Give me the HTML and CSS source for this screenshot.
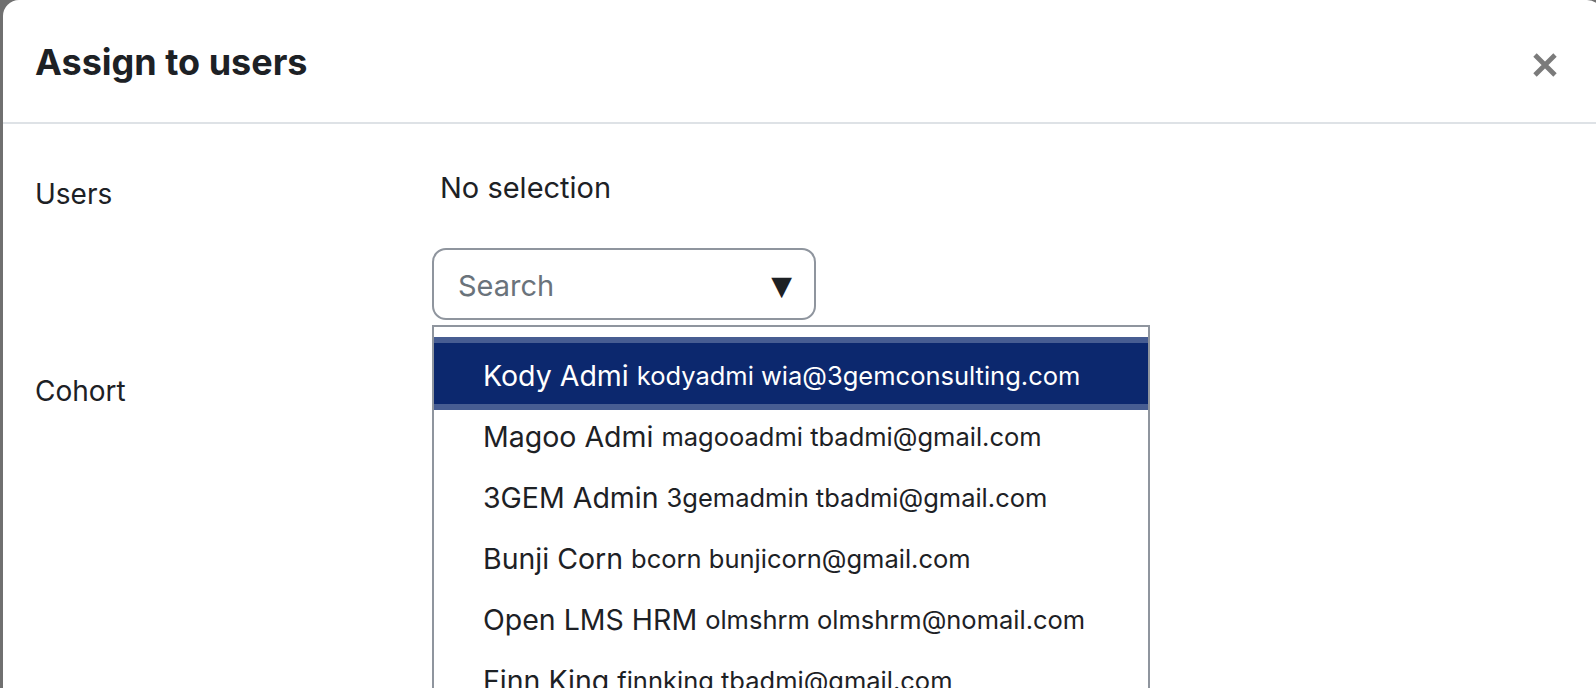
FILE: index.html
```html
<!DOCTYPE html>
<html lang="en">
<head>
<meta charset="utf-8">
<title>Assign to users</title>
<link rel="stylesheet" href="styles.css">
</head>
<body>
<div class="modal">
  <div class="modal-header">
    <h1 class="modal-title">Assign to users</h1>
    <button class="close" aria-label="Close">
      <svg width="26" height="26" viewBox="0 0 26 26"><path d="M3 3 L23 23 M23 3 L3 23" stroke="#7b7b7b" stroke-width="4.8" stroke-linecap="butt"/></svg>
    </button>
  </div>
  <div class="modal-body">
    <div class="form-row">
      <label class="form-label">Users</label>
      <div class="form-control-col">
        <div class="selection">No selection</div>
        <div class="autocomplete">
          <div class="search-box">
            <span class="placeholder">Search</span>
            <span class="arrow">&#9660;</span>
          </div>
          <ul class="suggestions">
            <li class="option selected"><span class="name">Kody Admi</span> <span class="meta">kodyadmi wia@3gemconsulting.com</span></li>
            <li class="option"><span class="name">Magoo Admi</span> <span class="meta">magooadmi tbadmi@gmail.com</span></li>
            <li class="option"><span class="name">3GEM Admin</span> <span class="meta">3gemadmin tbadmi@gmail.com</span></li>
            <li class="option"><span class="name">Bunji Corn</span> <span class="meta">bcorn bunjicorn@gmail.com</span></li>
            <li class="option"><span class="name">Open LMS HRM</span> <span class="meta">olmshrm olmshrm@nomail.com</span></li>
            <li class="option"><span class="name">Finn King</span> <span class="meta">finnking tbadmi@gmail.com</span></li>
          </ul>
        </div>
      </div>
    </div>
    <div class="form-row cohort-row">
      <label class="form-label">Cohort</label>
      <div class="form-control-col"></div>
    </div>
  </div>
</div>
</body>
</html>
```

FILE: styles.css
```css
html, body {
  margin: 0;
  padding: 0;
  height: 100%;
  overflow: hidden;
}
body {
  background: #707070;
  font-family: Inter, "Noto Sans", sans-serif;
  color: #1d2125;
}
.modal {
  margin-left: 3px;
  width: 1600px;
  height: 720px;
  background: #fff;
  border-radius: 16px 16px 0 0;
}
.modal-header {
  height: 122px;
  border-bottom: 2px solid #dee2e6;
  display: flex;
  align-items: flex-start;
  justify-content: space-between;
  padding: 0 45px 0 32px;
  box-sizing: content-box;
}
.modal-title {
  margin: 0;
  padding-top: 38px;
  font-size: 36px;
  line-height: 48px;
  font-weight: 700;
  color: #1d2125;
}
.close {
  border: 0;
  background: none;
  padding: 0;
  margin-top: 52px;
  width: 26px;
  height: 26px;
  cursor: pointer;
}
.close svg { display: block; }
.modal-body {
  padding: 46px 0 0 32px;
}
.form-row {
  display: grid;
  grid-template-columns: 397px 1fr;
}
.form-label {
  font-size: 28px;
  line-height: 36px;
  padding-top: 6px;
}
.selection {
  font-size: 29px;
  line-height: 36px;
  padding-left: 8px;
}
.autocomplete {
  position: relative;
  margin-top: 42px;
  width: 384px;
}
.search-box {
  box-sizing: border-box;
  height: 72px;
  border: 2px solid #8f959e;
  border-radius: 14px;
  display: flex;
  align-items: center;
  justify-content: space-between;
  padding: 2px 22px 0 24px;
}
.placeholder {
  font-size: 29px;
  color: #6a737b;
}
.arrow {
  font-size: 27px;
  line-height: 1;
  color: #1d2125;
  font-family: "DejaVu Sans", sans-serif;
}
.suggestions {
  position: absolute;
  top: 77px;
  left: 0;
  width: 718px;
  box-sizing: border-box;
  margin: 0;
  padding: 16px 0 0 0;
  list-style: none;
  border: 2px solid #8f959e;
  border-bottom: 0;
  background: #fff;
  overflow: hidden;
  height: 400px;
}
.option {
  height: 61px;
  display: flex;
  align-items: center;
  padding: 3px 0 0 49px;
  box-sizing: border-box;
  white-space: nowrap;
  color: #1d2125;
}
.option .name {
  font-size: 28.5px;
  margin-right: 8px;
}
.option .meta {
  font-size: 25.5px;
}
.option.selected {
  background: #0c286e;
  color: #fff;
  box-shadow: 0 0 0 6px #475d92;
  position: relative;
}
.cohort-row {
  margin-top: 47px;
}
```
